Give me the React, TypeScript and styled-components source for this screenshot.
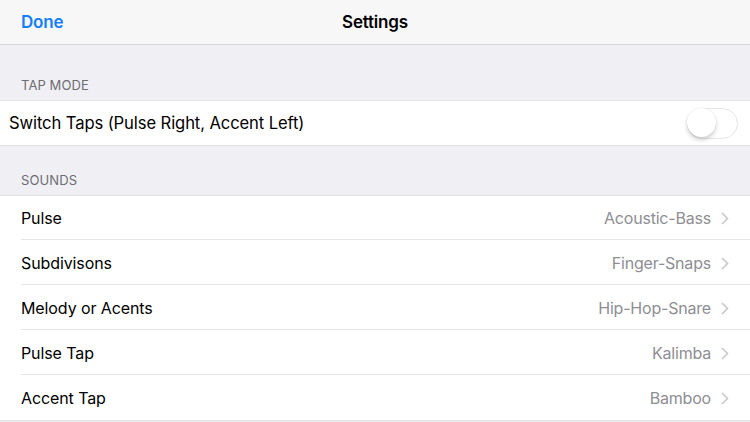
import React from "react";
import styled, { createGlobalStyle } from "styled-components";

const Global = createGlobalStyle`
  html, body { margin: 0; padding: 0; background: #efeff4; }
  body { font-family: Inter, "Noto Sans", "Liberation Sans", sans-serif; -webkit-font-smoothing: antialiased; }
`;

const Page = styled.div`
  width: 750px;
  height: 422px;
  overflow: hidden;
  background: #efeff4;
`;

const NavBar = styled.div`
  height: 44px;
  background: #f7f7f8;
  border-bottom: 1px solid #d6d6da;
  display: grid;
  grid-template-columns: 1fr auto 1fr;
  align-items: center;
  padding: 0 21px;
`;

const NavButton = styled.span`
  color: #157efb;
  font-size: 17px;
  font-weight: 600;
  letter-spacing: -0.2px;
`;

const NavTitle = styled.span`
  color: #000;
  font-size: 17px;
  font-weight: 600;
  letter-spacing: -0.2px;
`;

const SectionHeader = styled.div<{ $h: number }>`
  height: ${(p) => p.$h}px;
  box-sizing: border-box;
  padding: 0 21px 7px;
  display: flex;
  align-items: flex-end;
  color: #6d6d72;
  font-size: 13px;
  letter-spacing: 0.1px;
  border-bottom: 1px solid #e2e2e6;
`;

const Group = styled.div`
  background: #fff;
  border-bottom: 1px solid #e2e2e6;
`;

const Row = styled.div<{ $inset: number; $last?: boolean }>`
  height: 44px;
  display: flex;
  align-items: center;
  padding-left: ${(p) => p.$inset}px;
  position: relative;
  ${(p) =>
    p.$last
      ? ""
      : `&::after { content: ""; position: absolute; left: 21px; right: 0; bottom: 0; height: 1px; background: #e6e6ea; }`}
  & + & { margin-top: 1px; }
`;

const Label = styled.span<{ $size?: number }>`
  flex: 1;
  color: #000;
  font-size: ${(p) => p.$size ?? 16}px;
  letter-spacing: -0.1px;
`;

const Value = styled.span`
  color: #8e8e93;
  font-size: 16px;
  letter-spacing: -0.2px;
  margin-right: 10px;
`;

const Chevron = styled.svg`
  width: 8px;
  height: 13px;
  margin-right: 21px;
`;

const Switch = styled.div`
  width: 51px;
  height: 31px;
  box-sizing: border-box;
  border-radius: 16px;
  border: 1.5px solid #e5e5ea;
  background: #fff;
  margin-right: 12px;
  position: relative;
`;

const Knob = styled.div`
  position: absolute;
  left: -1px;
  top: -1px;
  width: 29px;
  height: 29px;
  border-radius: 50%;
  background: #fff;
  box-shadow: 0 3px 4px rgba(0, 0, 0, 0.18), 0 0 0 0.5px rgba(0, 0, 0, 0.06);
`;

const sounds = [
  ["Pulse", "Acoustic-Bass"],
  ["Subdivisons", "Finger-Snaps"],
  ["Melody or Acents", "Hip-Hop-Snare"],
  ["Pulse Tap", "Kalimba"],
  ["Accent Tap", "Bamboo"],
];

const ChevronIcon = () => (
  <Chevron viewBox="0 0 8 13">
    <path d="M1 1l5.5 5.5L1 12" fill="none" stroke="#c7c7cc" strokeWidth="1.6" />
  </Chevron>
);

export default function App() {
  return (
    <Page>
      <Global />
      <NavBar>
        <NavButton>Done</NavButton>
        <NavTitle>Settings</NavTitle>
        <span />
      </NavBar>
      <SectionHeader $h={56}>TAP MODE</SectionHeader>
      <Group>
        <Row $inset={9} $last>
          <Label $size={16.6}>Switch Taps (Pulse Right, Accent Left)</Label>
          <Switch>
            <Knob />
          </Switch>
        </Row>
      </Group>
      <SectionHeader $h={50}>SOUNDS</SectionHeader>
      <Group>
        {sounds.map(([l, v], i) => (
          <Row key={l} $inset={21} $last={i === sounds.length - 1}>
            <Label>{l}</Label>
            <Value>{v}</Value>
            <ChevronIcon />
          </Row>
        ))}
      </Group>
    </Page>
  );
}
